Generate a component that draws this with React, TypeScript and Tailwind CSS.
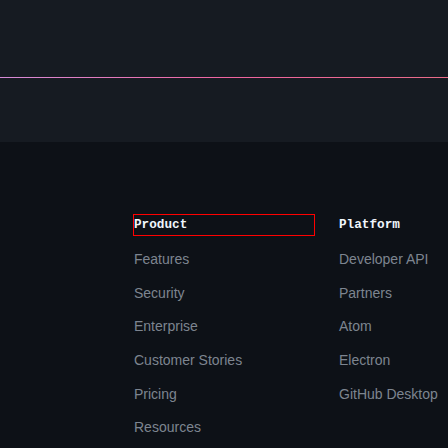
import React from 'react';

const columns = [
  {
    title: 'Product',
    focused: true,
    links: ['Features', 'Security', 'Enterprise', 'Customer Stories', 'Pricing', 'Resources'],
  },
  {
    title: 'Platform',
    focused: false,
    links: ['Developer API', 'Partners', 'Atom', 'Electron', 'GitHub Desktop'],
  },
];

export default function App() {
  return (
    <div className="h-[448px] w-[448px] overflow-hidden bg-[#0d1117] font-['Liberation_Sans',Arial,sans-serif]">
      {/* Top band with gradient rule */}
      <div className="h-[142px] bg-[#161b22] pt-[77px]">
        <div className="h-px bg-gradient-to-r from-[#d68bd8] via-[#f064a0] to-[#ea6c88]" />
      </div>

      {/* Footer columns */}
      <div className="flex gap-[23px] pl-[133px] pt-[72px]">
        {columns.map((col) => (
          <div key={col.title} className={col.focused ? 'w-[182px] shrink-0' : 'flex-1 whitespace-nowrap'}>
            <h3
              className={`h-[22px] border font-['Liberation_Mono',monospace] text-[12.7px] font-bold leading-[20px] text-[#f0f6fc] ${
                col.focused ? 'border-[#ff0000]' : 'border-transparent'
              }`}
            >
              {col.title}
            </h3>
            <ul className="mt-[7px] pl-px">
              {col.links.map((link) => (
                <li key={link} className="flex h-[33.6px] items-center whitespace-nowrap text-[14px] text-[#7d8590]">
                  {link}
                </li>
              ))}
            </ul>
          </div>
        ))}
      </div>
    </div>
  );
}
